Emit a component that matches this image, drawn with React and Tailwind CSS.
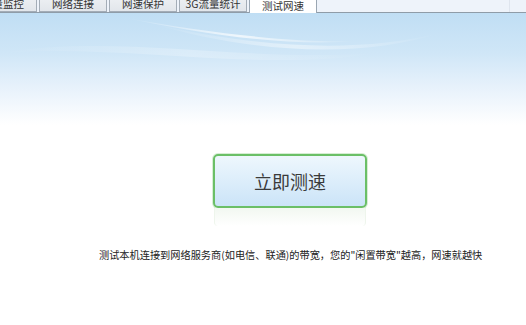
import React from "react";

const font = { fontFamily: '"Noto Sans CJK SC", "Noto Sans", sans-serif' };

function Tab({ label, active, first }) {
  return (
    <div
      className={
        "relative flex h-[24px] w-[68px] shrink-0 items-end justify-center pb-[2px] text-[10.5px] leading-none text-[#333] " +
        (active
          ? "z-10 h-[25px] border border-b-0 border-[#9aa6b2] bg-white"
          : "border border-[#a4adb7] bg-gradient-to-b from-[#f4f6f8] to-[#e2e6eb]") +
        (first ? " ml-[-31px]" : "")
      }
    >
      {label}
    </div>
  );
}

export default function App() {
  return (
    <div className="relative h-[325px] w-[526px] overflow-hidden bg-white" style={font}>
      {/* tab strip */}
      <div className="relative h-[13px] overflow-hidden bg-[#eef3fa]">
        <div className="mt-[-12px] flex items-start gap-[2px]">
          <Tab label="流量监控" first />
          <Tab label="网络连接" />
          <Tab label="网速保护" />
          <Tab label="3G流量统计" />
          <Tab label="测试网速" active />
          <div className="ml-[190px] h-[24px] w-px bg-[#dfe5ee]" />
        </div>
        <div className="absolute bottom-0 left-0 h-px w-full bg-[#8f9ca8]" />
      </div>

      {/* sky background */}
      <div className="relative h-[112px] bg-[linear-gradient(to_bottom,#c0def4_0%,#cfe6f7_35%,#e6f1fb_65%,#ffffff_100%)]">
        <svg className="absolute inset-0" width="526" height="112" viewBox="0 0 526 112">
          <defs>
            <linearGradient id="sw1" x1="0" x2="1" y1="0" y2="0">
              <stop offset="0" stopColor="#fff" stopOpacity="0" />
              <stop offset="0.5" stopColor="#fff" stopOpacity="0.7" />
              <stop offset="1" stopColor="#fff" stopOpacity="0" />
            </linearGradient>
          </defs>
          <path d="M120 4 C 200 20, 280 34, 360 28 C 300 30, 220 22, 120 4 Z" fill="url(#sw1)" />
          <path d="M150 10 C 250 40, 360 46, 440 20 C 360 40, 260 36, 150 10 Z" fill="url(#sw1)" opacity="0.6" />
          <path d="M0 40 C 120 20, 240 50, 380 40 C 260 60, 120 30, 0 40 Z" fill="url(#sw1)" opacity="0.35" />
        </svg>
      </div>

      {/* content */}
      <div className="flex flex-col">
        <div className="ml-[213px] mt-[29px] flex h-[54px] w-[154px] items-center justify-center rounded-[5px] border-2 border-[#6bbf67] bg-gradient-to-b from-[#eef7fd] to-[#cbe4f8] text-[18px] leading-none text-[#3a3a3a] shadow-[0_0_0_1px_#d6eed4]">
          立即测速
        </div>
        <div className="ml-[214px] h-[18px] w-[152px] rounded-b-[4px] border-x border-[#eef5ec] bg-gradient-to-b from-[#f2f8f1] to-white" />
        <div className="ml-[99px] mt-[24px] whitespace-nowrap text-[10.2px] leading-none text-[#222]">
          测试本机连接到网络服务商(如电信、联通)的带宽，您的"闲置带宽"越高，网速就越快
        </div>
      </div>
    </div>
  );
}
